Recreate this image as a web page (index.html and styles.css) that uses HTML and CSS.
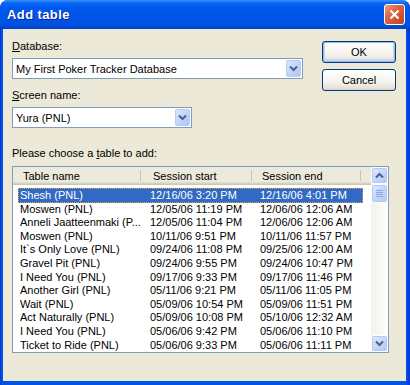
FILE: index.html
```html
<!DOCTYPE html>
<html lang="en">
<head>
    <meta charset="UTF-8">
    <title>Add table</title>
    <link rel="stylesheet" href="styles.css">
</head>
<body>
    <div class="window">
        <div class="titlebar">
            <span class="title">Add table</span>
            <span class="close">
                <svg width="13" height="13" viewBox="0 0 13 13"><path d="M2.5 2.5 L10.5 10.5 M10.5 2.5 L2.5 10.5" stroke="#fff" stroke-width="2.2" fill="none"/></svg>
            </span>
        </div>
        <div class="client">
            <div class="top">
                <div class="fields">
                    <div class="label"><u>D</u>atabase:</div>
                    <div class="combo combo-wide">
                        <span class="combo-text">My First Poker Tracker Database</span>
                        <span class="combo-btn"><svg width="9" height="7" viewBox="0 0 9 7"><path d="M1 1.5 L4.5 5 L8 1.5" stroke="#4D6185" stroke-width="2" fill="none"/></svg></span>
                    </div>
                    <div class="label label-gap"><u>S</u>creen name:</div>
                    <div class="combo combo-narrow">
                        <span class="combo-text">Yura (PNL)</span>
                        <span class="combo-btn"><svg width="9" height="7" viewBox="0 0 9 7"><path d="M1 1.5 L4.5 5 L8 1.5" stroke="#4D6185" stroke-width="2" fill="none"/></svg></span>
                    </div>
                </div>
                <div class="buttons">
                    <button class="btn btn-default">OK</button>
                    <button class="btn">Cancel</button>
                </div>
            </div>
            <div class="label list-label">Please choose a <u>t</u>able to add:</div>
            <div class="listview">
                <div class="lv-main">
                    <div class="lv-header">
                        <div class="hcol h1">Table name</div>
                        <div class="hcol h2">Session start</div>
                        <div class="hcol h3">Session end</div>
                        <div class="hfill"></div>
                    </div>
                    <div class="lv-rows">
                        <div class="row selected"><span class="c1">Shesh (PNL)</span><span class="c2">12/16/06 3:20 PM</span><span class="c3">12/16/06 4:01 PM</span></div>
                        <div class="row"><span class="c1">Moswen (PNL)</span><span class="c2">12/05/06 11:19 PM</span><span class="c3">12/06/06 12:06 AM</span></div>
                        <div class="row"><span class="c1">Anneli Jaatteenmaki (P...</span><span class="c2">12/05/06 11:04 PM</span><span class="c3">12/06/06 12:06 AM</span></div>
                        <div class="row"><span class="c1">Moswen (PNL)</span><span class="c2">10/11/06 9:51 PM</span><span class="c3">10/11/06 11:57 PM</span></div>
                        <div class="row"><span class="c1">It`s Only Love (PNL)</span><span class="c2">09/24/06 11:08 PM</span><span class="c3">09/25/06 12:00 AM</span></div>
                        <div class="row"><span class="c1">Gravel Pit (PNL)</span><span class="c2">09/24/06 9:55 PM</span><span class="c3">09/24/06 10:47 PM</span></div>
                        <div class="row"><span class="c1">I Need You (PNL)</span><span class="c2">09/17/06 9:33 PM</span><span class="c3">09/17/06 11:46 PM</span></div>
                        <div class="row"><span class="c1">Another Girl (PNL)</span><span class="c2">05/11/06 9:21 PM</span><span class="c3">05/11/06 11:05 PM</span></div>
                        <div class="row"><span class="c1">Wait (PNL)</span><span class="c2">05/09/06 10:54 PM</span><span class="c3">05/09/06 11:51 PM</span></div>
                        <div class="row"><span class="c1">Act Naturally (PNL)</span><span class="c2">05/09/06 10:08 PM</span><span class="c3">05/10/06 12:32 AM</span></div>
                        <div class="row"><span class="c1">I Need You (PNL)</span><span class="c2">05/06/06 9:42 PM</span><span class="c3">05/06/06 11:10 PM</span></div>
                        <div class="row"><span class="c1">Ticket to Ride (PNL)</span><span class="c2">05/06/06 9:33 PM</span><span class="c3">05/06/06 11:11 PM</span></div>
                    </div>
                </div>
                <div class="scrollbar">
                    <div class="sb-btn"><svg width="9" height="7" viewBox="0 0 9 7"><path d="M1 5.5 L4.5 2 L8 5.5" stroke="#4D6185" stroke-width="2" fill="none"/></svg></div>
                    <div class="sb-track">
                        <div class="sb-thumb">
                            <svg width="7" height="8" viewBox="0 0 7 8"><path d="M0 0.5 H7 M0 2.5 H7 M0 4.5 H7 M0 6.5 H7" stroke="#8DA6DC" stroke-width="1"/></svg>
                        </div>
                    </div>
                    <div class="sb-btn"><svg width="9" height="7" viewBox="0 0 9 7"><path d="M1 1.5 L4.5 5 L8 1.5" stroke="#4D6185" stroke-width="2" fill="none"/></svg></div>
                </div>
            </div>
        </div>
    </div>
</body>
</html>
```

FILE: styles.css
```css
body {
    margin: 0;
    background: #fff;
    font-family: Tahoma, "Liberation Sans", Arial, sans-serif;
    font-size: 11px;
    color: #000;
}
.window {
    width: 410px;
    height: 385px;
    display: flex;
    flex-direction: column;
    background: linear-gradient(to right, #0831D9, #0055E5 2px, #0055E5 406px, #0831D9);
    border-radius: 8px 8px 0 0;
    overflow: hidden;
}
.titlebar {
    height: 29px;
    flex: none;
    display: flex;
    align-items: center;
    padding: 0 5px 0 7px;
    background: linear-gradient(to bottom, #3A93FF 0, #0A66F5 3px, #0058EE 8px, #0055E8 18px, #0050E0 25px, #0040C4 29px);
}
.title {
    color: #fff;
    font-family: "Trebuchet MS", "Liberation Sans", sans-serif;
    font-weight: bold;
    font-size: 13px;
    letter-spacing: 0.4px;
    text-shadow: 1px 1px 0 #0A1E8C;
}
.close {
    margin-left: auto;
    width: 19px;
    height: 19px;
    border: 1px solid #fff;
    border-radius: 3px;
    background: linear-gradient(135deg, #F0A088 0, #E0694A 35%, #D2512F 70%, #C1401E 100%);
    display: flex;
    align-items: center;
    justify-content: center;
}
.client {
    flex: 1;
    margin: 0 4px 4px 3px;
    background: #ECE9D8;
    padding: 11px 0 0 9px;
}
.top {
    display: flex;
}
.fields {
    width: 291px;
}
.label {
    height: 13px;
    line-height: 13px;
    white-space: nowrap;
}
.label-gap {
    margin-top: 10px;
}
.combo {
    margin-top: 5px;
    height: 21px;
    box-sizing: border-box;
    border: 1px solid #7F9DB9;
    background: #fff;
    display: flex;
    align-items: center;
    padding-left: 3px;
}
.combo-wide {
    width: 291px;
}
.combo-narrow {
    width: 180px;
}
.combo-text {
    flex: 1;
    white-space: nowrap;
}
.combo-btn {
    width: 15px;
    height: 17px;
    margin: 1px;
    box-sizing: border-box;
    border: 1px solid #B9CCF5;
    border-radius: 2px;
    background: linear-gradient(135deg, #DCE6FD, #C3D4FB 50%, #B2C6F5);
    display: flex;
    align-items: center;
    justify-content: center;
}
.buttons {
    margin-left: 19px;
    padding-top: 1px;
    display: flex;
    flex-direction: column;
    gap: 6px;
}
.btn {
    width: 74px;
    height: 22px;
    padding: 0;
    font: inherit;
    color: #000;
    border: 1px solid #003C74;
    border-radius: 3px;
    background: linear-gradient(to bottom, #FFFFFF, #F4F3EE 60%, #E6E3D8 90%, #D6D0C5);
}
.btn-default {
    box-shadow: inset 0 0 0 1px #9DB9EB, inset 0 -1px 0 2px #C7D6F6;
}
.list-label {
    margin-top: 19px;
}
.listview {
    margin-top: 6px;
    width: 377px;
    height: 187px;
    box-sizing: border-box;
    border: 1px solid #7F9DB9;
    background: #fff;
    display: flex;
}
.lv-main {
    flex: 1;
    overflow: hidden;
}
.lv-header {
    height: 18px;
    display: flex;
    background: #EBEADB;
    box-shadow: inset 0 -1px #CBC7B8, inset 0 -2px #D6D2C2, inset 0 -3px #E2DECD;
}
.hcol {
    box-sizing: border-box;
    line-height: 18px;
    white-space: nowrap;
    background: linear-gradient(#C7C5B2, #C7C5B2) no-repeat right 1px top 3px / 1px 11px;
}
.h1 {
    width: 129px;
    padding-left: 10px;
}
.h2 {
    width: 111px;
    padding-left: 11px;
}
.h3 {
    width: 109px;
    padding-left: 9px;
}
.hfill {
    flex: 1;
}
.lv-rows {
    padding-top: 3px;
}
.row {
    display: flex;
    height: 13.6px;
    line-height: 14px;
    margin-left: 5px;
    width: 345px;
    white-space: nowrap;
}
.row.selected {
    height: 15px;
    line-height: 15px;
    margin-bottom: -1.4px;
    background: #316AC5;
    color: #fff;
    outline: 1px dotted #E0A040;
    outline-offset: -1px;
}
.c1 {
    width: 124px;
    padding-left: 2px;
    box-sizing: border-box;
    overflow: hidden;
}
.c2 {
    width: 111px;
    padding-left: 8px;
    box-sizing: border-box;
}
.c3 {
    width: 110px;
    padding-left: 7px;
    box-sizing: border-box;
}
.scrollbar {
    width: 17px;
    flex: none;
    display: flex;
    flex-direction: column;
    background: linear-gradient(to right, #F3F1EC, #FEFEFB);
}
.sb-btn,
.sb-thumb {
    box-sizing: border-box;
    border: 1px solid #fff;
    border-radius: 3px;
    box-shadow: inset 0 0 0 1px #B4C8F3;
    background: linear-gradient(135deg, #E1EAFE, #C6D6FC 50%, #B3C7F5);
    display: flex;
    align-items: center;
    justify-content: center;
}
.sb-btn {
    height: 17px;
}
.sb-track {
    flex: 1;
}
.sb-thumb {
    height: 19px;
}
```
